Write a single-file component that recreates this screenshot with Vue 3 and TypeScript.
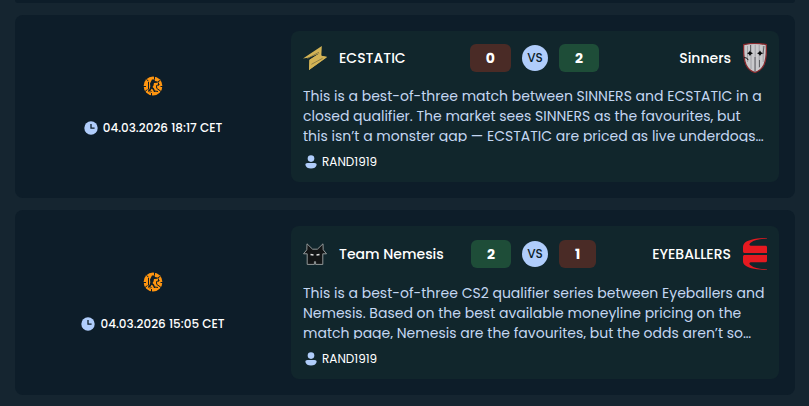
<script setup lang="ts">
type Logo = 'ecstatic' | 'sinners' | 'nemesis' | 'eyeballers'

interface Team {
  name: string
  logo: Logo
  score: number
}

interface Match {
  id: number
  date: string
  home: Team
  away: Team
  summary: string[]
  author: string
}

const matches: Match[] = [
  {
    id: 1,
    date: '04.03.2026 18:17 CET',
    home: { name: 'ECSTATIC', logo: 'ecstatic', score: 0 },
    away: { name: 'Sinners', logo: 'sinners', score: 2 },
    summary: [
      'This is a best-of-three match between SINNERS and ECSTATIC in a',
      'closed qualifier. The market sees SINNERS as the favourites, but',
      'this isn’t a monster gap — ECSTATIC are priced as live underdogs…',
    ],
    author: 'RAND1919',
  },
  {
    id: 2,
    date: '04.03.2026 15:05 CET',
    home: { name: 'Team Nemesis', logo: 'nemesis', score: 2 },
    away: { name: 'EYEBALLERS', logo: 'eyeballers', score: 1 },
    summary: [
      'This is a best-of-three CS2 qualifier series between Eyeballers and',
      'Nemesis. Based on the best available moneyline pricing on the',
      'match page, Nemesis are the favourites, but the odds aren’t so…',
    ],
    author: 'RAND1919',
  },
]

const outcome = (own: Team, other: Team): string => (own.score > other.score ? 'win' : 'loss')
</script>

<template>
  <main class="feed">
    <div class="card card-end"></div>
    <article v-for="match in matches" :key="match.id" class="card match">
      <div class="meta">
        <svg class="game" viewBox="0 0 20 20" aria-hidden="true">
          <circle cx="10" cy="10" r="9.400" fill="#ff9510" />
          <g fill="none" stroke="#0d1d29" stroke-width="1">
            <path d="M11.500 0v3.500M3.500 3.500l2 1.500M0 10.500h3M2 15.500l2.500-2M17 4.500L14.500 6M20 10.500h-2.500M18 15.500l-2.500-2M8.500 17v3" />
            <path d="M5.500 6v7.500M15.500 6.500v3M7 16.500l1.500-1.500M12 15l3 .5" />
          </g>
          <path d="M9 3.500h2.500l.5 1.500 2.500.5v1.200l-3.500.3-.5 2.500-1 1.500 1.500 1.500 1.500 3.500h-1.500l-1.200-2.500-1.300-.8-1 2-2 1.300-.5-1.200L6.500 13l.8-2.500L7 7.500z" fill="#0d1d29" />
          <path d="M16.500 8.500l-3 1 .2 2.800 2.300 1.700" fill="none" stroke="#0d1d29" />
        </svg>
        <time class="date">
          <svg class="clock" viewBox="0 0 14 14" aria-hidden="true">
            <circle cx="7" cy="7" r="6.7" fill="#b0cdfb" />
            <path d="M7 3v4.2h3.6" fill="none" stroke="#0d1d29" stroke-width="1.3" />
          </svg>
          {{ match.date }}
        </time>
      </div>

      <section class="panel">
        <header class="versus">
          <div v-for="(team, i) in [match.home, match.away]" :key="team.name" class="side" :class="{ away: i === 1 }">
            <svg v-if="team.logo === 'ecstatic'" class="logo" viewBox="0 0 24 24" aria-hidden="true">
              <path d="M0 12.6L18.8 0l-.5 9.8 5.7 1L6 24l.5-10.200L17 7.300 5.200 11.800z" fill="#d3b355" />
              <path d="M18.3 9.8L24 11.2 6 24l.4-10L13 9.5l4.6-2.4z" fill="#d3b355" />
              <path d="M4.400 12.500L16 6.200M8.400 18.300l11.200-6" stroke="#7d7141" stroke-width=".8" />
            </svg>
            <svg v-else-if="team.logo === 'sinners'" class="logo" viewBox="0 0 24 30" aria-hidden="true">
              <path d="M.7 1.700C8 0 16 0 23.300 1.700c.3 8 .2 14.100-2.200 19.700-1.800 4-5 6.900-9.100 8.100-4.100-1.200-7.300-4.100-9.100-8.100C.5 15.800.4 9.700.7 1.700z" fill="#c9c9cc" stroke="#88292d" stroke-width="1.300" />
              <path d="M8 2v24M12.200 1.500v27M16.200 2v23M20.200 3v16M4.500 3v16" stroke="#9b9ca0" stroke-width=".9" />
              <path d="M12 14v15M7.500 2v6M16.500 17v7M21 3l-1 8" stroke="#4b4c50" stroke-width=".8" />
              <path d="M7 7.500l1.100 1.800L10 10.300l-1.900 1L7 13.100l-1.100-1.800L4 10.300l1.900-1zM17 7.500l1.100 1.800 1.900 1-1.900 1-1.100 1.800-1.100-1.800-1.900-1 1.900-1z" fill="#08090b" />
              <path d="M1.200 14.500l2.600.6 1.400 2" fill="none" stroke="#111" />
            </svg>
            <svg v-else-if="team.logo === 'nemesis'" class="logo" viewBox="0 0 24 22" aria-hidden="true">
              <path d="M4 .8l5.600 5.400h4.800L20 .8l.2 6 3.300 4h-3.700v10.600h-7.200v-2.700h-1.200v2.700H4.200V10.800H.5l3.300-4z" fill="#131516" stroke="#a0a5a5" stroke-width=".9" />
              <path d="M7.500 11.500l3 .5M13.500 12l3-.5" stroke="#dedede" stroke-width="1.300" />
            </svg>
            <svg v-else class="logo" viewBox="0 0 24 32" aria-hidden="true">
              <path d="M24 0C13 .2 4 2 1.200 5.400.2 6.800 0 7.800 0 9.500V13c0 1.500.5 2 2 2h22V9.400c0-1.100-.5-1.600-1.500-1.600H9c-3 0-3.500-1.500-1-3.400C11 2 17 .8 24 .5z" fill="#e61920" />
              <path d="M24 32C13 31.800 4 30 1.200 26.600.2 25.200 0 24.200 0 22.500V19c0-1.500.5-2 2-2h22v5.600c0 1.100-.5 1.600-1.500 1.600H9c-3 0-3.500 1.500-1 3.400 3 2.400 9 3.600 16 3.900z" fill="#e61920" />
            </svg>
            <h2 class="team">{{ team.name }}</h2>
            <span class="score" :class="outcome(team, i === 0 ? match.away : match.home)">{{ team.score }}</span>
          </div>
          <span class="vs">VS</span>
        </header>

        <p class="summary">
          <span v-for="line in match.summary" :key="line" class="line">{{ line }}</span>
        </p>

        <footer class="author">
          <svg class="person" viewBox="0 0 12 14" aria-hidden="true">
            <circle cx="6" cy="3.600" r="3.300" fill="#b0cdfb" />
            <path d="M2.600 8h6.800C11 8 11.800 8.800 11.600 10 11 12.400 9 13.600 6 13.600S1 12.400.4 10C.2 8.800 1 8 2.600 8z" fill="#b0cdfb" />
          </svg>
          {{ match.author }}
        </footer>
      </section>
    </article>
  </main>
</template>

<style>
body {
  background: #152530;
}
</style>

<style scoped>
.feed {
  display: flex;
  flex-direction: column;
  gap: 12px;
  padding: 0 14px 12px 15px;
  font-family: Poppins, Inter, "Liberation Sans", sans-serif;
  color: #fff;
}

.card {
  background: #0d1d29;
  border-radius: 8px;
}

.card-end {
  height: 3px;
  border-radius: 0 0 8px 8px;
}

.match {
  display: grid;
  grid-template-columns: minmax(0, 1fr) minmax(0, 2fr);
  gap: 16px;
  padding: 16px;
}

.meta {
  display: flex;
  flex-direction: column;
  align-items: center;
  justify-content: center;
  gap: 22px;
}

.game {
  width: 20px;
  height: 20px;
}

.date {
  display: flex;
  align-items: center;
  gap: 5px;
  font-size: 12px;
  line-height: 20px;
  font-weight: 500;
  white-space: nowrap;
}

.clock {
  width: 14px;
  height: 14px;
}

.panel {
  padding: 12px 12px 10px;
  border-radius: 8px;
  background: #11262c;
}

.versus {
  display: grid;
  grid-template-columns: minmax(0, 1fr) 26px minmax(0, 1fr);
  align-items: center;
  gap: 11px;
}

.side {
  grid-row: 1;
  grid-column: 1;
  display: flex;
  align-items: center;
  gap: 12px;
}

.side.away {
  grid-column: 3;
  flex-direction: row-reverse;
}

.logo {
  display: block;
  flex: none;
  width: 24px;
}

.team {
  flex: 1;
  margin: 0;
  font-size: 14px;
  line-height: 20px;
  font-weight: 500;
  white-space: nowrap;
}

.away .team {
  text-align: right;
}

.score {
  padding: 0 16px;
  border-radius: 6px;
  font-size: 14px;
  line-height: 28px;
  font-weight: 700;
}

.win {
  background: #1e4d38;
}

.loss {
  background: #4a2b26;
}

.vs {
  grid-row: 1;
  grid-column: 2;
  border-radius: 50%;
  background: #b0cdfb;
  color: #0d1d29;
  font-size: 12px;
  line-height: 26px;
  font-weight: 500;
  text-align: center;
}

.summary {
  height: 56px;
  margin: 13px 0 10px;
  overflow: hidden;
  font-size: 14px;
  line-height: 20px;
  color: #c4d7f2;
}

.line {
  display: block;
  white-space: nowrap;
}

.author {
  display: flex;
  align-items: center;
  gap: 5px;
  padding-left: 2px;
  font-size: 12px;
  line-height: 20px;
}

.person {
  width: 12px;
  height: 14px;
}
</style>
